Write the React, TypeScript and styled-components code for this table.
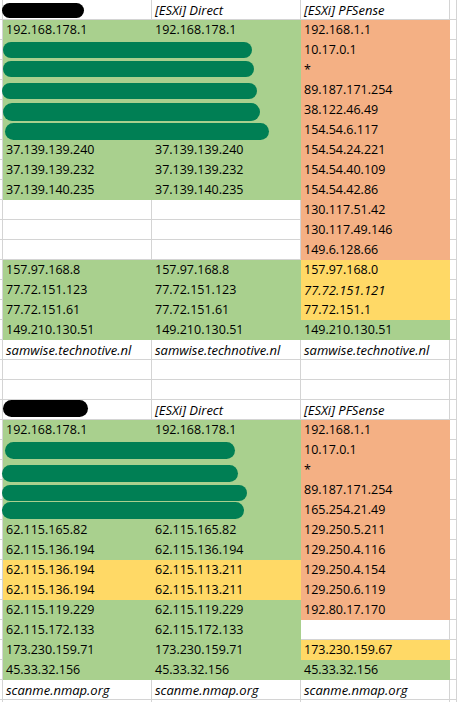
import React from "react";
import styled, { createGlobalStyle } from "styled-components";

const GREEN = "#A9D08E";
const ORANGE = "#F4B084";
const YELLOW = "#FFD966";
const GRID = "#D4D4D4";

const fills: Record<string, string | undefined> = {
  g: GREEN,
  o: ORANGE,
  y: YELLOW,
  w: undefined,
};

type Cell = { text: string; fill?: string; italic: boolean };

// "ggo" = fill per column, a leading "/" in a text makes it italic
const row = (f: string, ...texts: string[]): Cell[] =>
  [0, 1, 2].map((i) => {
    const raw = texts[i] ?? "";
    const italic = raw.startsWith("/");
    return { text: italic ? raw.slice(1) : raw, fill: fills[f[i]], italic };
  });

const rows: Cell[][] = [
  row("www", "", "/[ESXi] Direct", "/[ESXi] PFSense"),
  row("ggo", "192.168.178.1", "192.168.178.1", "192.168.1.1"),
  row("ggo", "", "", "10.17.0.1"),
  row("ggo", "", "", "*"),
  row("ggo", "", "", "89.187.171.254"),
  row("ggo", "", "", "38.122.46.49"),
  row("ggo", "", "", "154.54.6.117"),
  row("ggo", "37.139.139.240", "37.139.139.240", "154.54.24.221"),
  row("ggo", "37.139.139.232", "37.139.139.232", "154.54.40.109"),
  row("ggo", "37.139.140.235", "37.139.140.235", "154.54.42.86"),
  row("wwo", "", "", "130.117.51.42"),
  row("wwo", "", "", "130.117.49.146"),
  row("wwo", "", "", "149.6.128.66"),
  row("ggy", "157.97.168.8", "157.97.168.8", "157.97.168.0"),
  row("ggy", "77.72.151.123", "77.72.151.123", "/77.72.151.121"),
  row("ggy", "77.72.151.61", "77.72.151.61", "77.72.151.1"),
  row("ggg", "149.210.130.51", "149.210.130.51", "149.210.130.51"),
  row("www", "/samwise.technotive.nl", "/samwise.technotive.nl", "/samwise.technotive.nl"),
  row("www"),
  row("www"),
  row("www", "", "/[ESXi] Direct", "/[ESXi] PFSense"),
  row("ggo", "192.168.178.1", "192.168.178.1", "192.168.1.1"),
  row("ggo", "", "", "10.17.0.1"),
  row("ggo", "", "", "*"),
  row("ggo", "", "", "89.187.171.254"),
  row("ggo", "", "", "165.254.21.49"),
  row("ggo", "62.115.165.82", "62.115.165.82", "129.250.5.211"),
  row("ggo", "62.115.136.194", "62.115.136.194", "129.250.4.116"),
  row("yyo", "62.115.136.194", "62.115.113.211", "129.250.4.154"),
  row("yyo", "62.115.136.194", "62.115.113.211", "129.250.6.119"),
  row("ggo", "62.115.119.229", "62.115.119.229", "192.80.17.170"),
  row("ggw", "62.115.172.133", "62.115.172.133"),
  row("ggy", "173.230.159.71", "173.230.159.71", "173.230.159.67"),
  row("ggg", "45.33.32.156", "45.33.32.156", "45.33.32.156"),
  row("www", "/scanme.nmap.org", "/scanme.nmap.org", "/scanme.nmap.org"),
  row("www"),
];

// hand-drawn redaction marks over the sheet
const marks = [
  { x: 2, y: 3, w: 82, h: 15, dark: true },
  { x: 3, y: 42, w: 249, h: 16 },
  { x: 3, y: 61, w: 251, h: 16 },
  { x: 2, y: 83, w: 255, h: 16 },
  { x: 3, y: 103, w: 257, h: 18 },
  { x: 5, y: 123, w: 264, h: 17 },
  { x: 3, y: 400, w: 85, h: 17, dark: true },
  { x: 5, y: 442, w: 230, h: 17 },
  { x: 2, y: 465, w: 236, h: 17 },
  { x: 2, y: 485, w: 245, h: 16 },
  { x: 2, y: 502, w: 242, h: 17 },
];

const GlobalStyle = createGlobalStyle`
  html, body {
    margin: 0;
    padding: 0;
    background: #fff;
    overflow: hidden;
  }
`;

const App = () => {
  return (
    <>
      <GlobalStyle />
      <Sheet>
        {rows.map((cells, i) => (
          <SheetRow key={i}>
            <EdgeCell />
            {cells.map((cell, j) => (
              <DataCell key={j} $fill={cell.fill} $italic={cell.italic}>
                {cell.text}
              </DataCell>
            ))}
            <EdgeCell />
          </SheetRow>
        ))}
        {marks.map((m, i) => (
          <Redaction
            key={i}
            $dark={m.dark}
            style={{ left: m.x, top: m.y, width: m.w, height: m.h }}
          />
        ))}
      </Sheet>
    </>
  );
};
export default App;

const Sheet = styled.div`
  position: relative;
  display: flex;
  flex-direction: column;
  width: 457px;
  height: 702px;
  overflow: hidden;
  font-family: "Open Sans", "Noto Sans", sans-serif;
  font-size: 12.5px;
  color: #000;
`;

const SheetRow = styled.div`
  display: grid;
  grid-template-columns: 3px 149px 149px 149px 1fr;
  height: 20px;
  flex-shrink: 0;
`;

const EdgeCell = styled.div`
  box-sizing: border-box;
  border-right: 1px solid ${GRID};
  border-bottom: 1px solid ${GRID};
  background: #fff;
`;

const DataCell = styled.div<{ $fill?: string; $italic?: boolean }>`
  box-sizing: border-box;
  height: 20px;
  padding: 1px 0 0 3px;
  line-height: 18px;
  white-space: nowrap;
  overflow: hidden;
  background: ${(p) => p.$fill ?? "#fff"};
  border-right: 1px solid ${(p) => p.$fill ?? GRID};
  border-bottom: 1px solid ${(p) => p.$fill ?? GRID};
  font-style: ${(p) => (p.$italic ? "italic" : "normal")};
  font-size: ${(p) => (p.$italic ? "13px" : "12.5px")};
`;

const Redaction = styled.div<{ $dark?: boolean }>`
  position: absolute;
  border-radius: 9px;
  background: ${(p) => (p.$dark ? "#000" : "#007F54")};
`;
